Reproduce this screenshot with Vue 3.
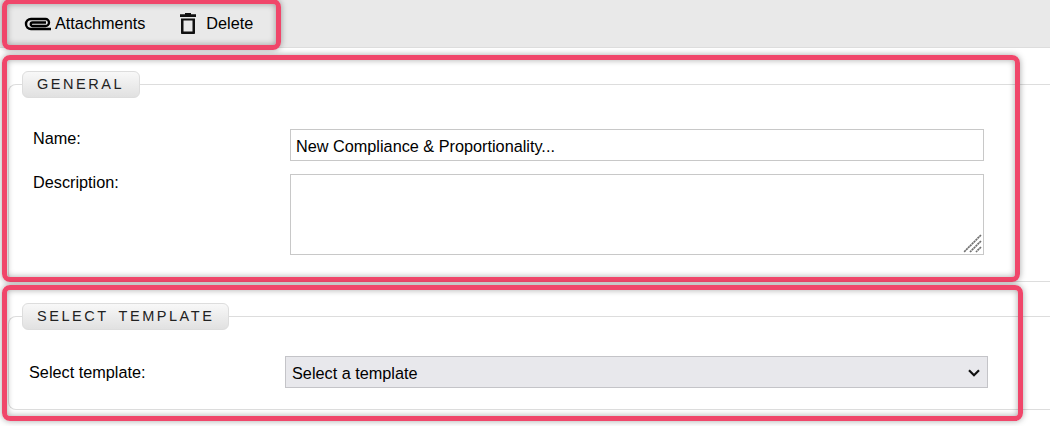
<template>
  <div class="page">
    <!-- toolbar -->
    <div class="toolbar">
      <button class="tool-btn attach">
        <svg width="28" height="14" viewBox="0 0 28 14" fill="none" stroke="#000" stroke-width="2.4">
          <path d="M27 12H7a5 5 0 0 1 0-10H21.500a3.500 3.500 0 0 1 0 7H8.500a1.750 1.750 0 0 1 0-3.500H22" />
        </svg>
        <span>Attachments</span>
      </button>
      <button class="tool-btn delete">
        <svg width="18" height="21" viewBox="0 0 18 21" fill="#111">
          <path d="M6 0h6v1.2h5V4H1V1.2h5z" />
          <path d="M2 5.500h14V20.200a.8.8 0 0 1-.8.8H2.800a.8.8 0 0 1-.8-.8zM4.500 7.500V18.500h9V7.500z" fill-rule="evenodd" />
        </svg>
        <span>Delete</span>
      </button>
    </div>

    <fieldset class="group general">
      <legend>GENERAL</legend>
      <div class="form-grid">
        <label class="lbl">Name:</label>
        <input v-model="name" type="text" class="field" />
        <label class="lbl desc">Description:</label>
        <div class="control">
          <textarea v-model="description" class="field area"></textarea>
          <svg class="grip" width="20" height="20" viewBox="0 0 20 20" stroke="#707070" stroke-width="1.7" stroke-dasharray="2.200 0.500">
            <path d="M18 1L1 18M18 7L7 18M18 13L13 18" />
          </svg>
        </div>
      </div>
    </fieldset>

    <fieldset class="group template">
      <legend>SELECT TEMPLATE</legend>
      <div class="form-grid">
        <label class="lbl">Select template:</label>
        <div class="control">
          <select v-model="template" class="picker">
            <option value="">Select a template</option>
          </select>
          <svg class="chevron" width="12" height="8" viewBox="0 0 12 8" fill="none" stroke="#111" stroke-width="2.2">
            <path d="M1 1.300L6 6.200L11 1.300" />
          </svg>
        </div>
      </div>
    </fieldset>

    <!-- red annotation boxes -->
    <div class="mark mark-toolbar"></div>
    <div class="mark mark-general"></div>
    <div class="mark mark-template"></div>
  </div>
</template>

<script setup>
import { ref } from 'vue'

const name = ref('New Compliance & Proportionality...')
const description = ref('')
const template = ref('')
</script>

<style>
html, body {
  margin: 0;
  background: #fff;
  overflow: hidden;
}
</style>

<style scoped>
.page {
  position: relative;
  width: 1050px;
  height: 426px;
  overflow: hidden;
  font-family: "Liberation Sans", Arial, sans-serif;
  font-size: 16.25px;
  color: #000;
}

.toolbar {
  display: flex;
  align-items: center;
  height: 47px;
  background: #e9e9e9;
  border-bottom: 1px solid #ddd;
}

.tool-btn {
  display: flex;
  align-items: center;
  padding: 0;
  background: none;
  border: none;
  font: inherit;
  color: #000;
}

.attach {
  margin-left: 24px;
  gap: 3px;
}

.delete {
  margin-left: 34px;
  gap: 9px;
}

.group {
  margin: 0 0 0 8px;
  min-width: 0;
  border: 1px solid #ddd;
  border-right: none;
  border-radius: 8px 0 0 8px;
}

.general {
  margin-top: 23px;
  padding: 31px 66px 26px 24px;
}

.general legend {
  margin-left: -11px;
  padding-right: 14.5px;
}

.template {
  margin-top: 21px;
  padding: 26px 62px 21px 20px;
}

.template legend {
  margin-left: -7px;
}

legend {
  padding: 0 13.5px 0 14px;
  height: 27px;
  box-sizing: border-box;
  line-height: 25px;
  font-size: 14.5px;
  letter-spacing: 2.53px;
  word-spacing: 4px;
  color: #222;
  background: linear-gradient(180deg, #f8f8f8, #e1e1e1);
  border: 1px solid #ddd;
  border-radius: 6px;
}

.form-grid {
  display: grid;
  grid-template-columns: 257px 1fr;
  row-gap: 13px;
}

.template .form-grid {
  grid-template-columns: 256px 1fr;
  align-items: center;
}

.lbl {
  line-height: 18px;
}

.desc {
  margin-top: -1px;
}

.control {
  position: relative;
}

.field {
  box-sizing: border-box;
  width: 100%;
  height: 32px;
  margin: 0;
  padding: 2px 5px 0;
  border: 1px solid #c8c8c8;
  border-radius: 0;
  outline: none;
  font: inherit;
  color: #000;
  display: block;
}

.area {
  height: 81px;
  padding: 5px;
  resize: none;
}

.grip {
  position: absolute;
  right: 1px;
  bottom: 1px;
}

.picker {
  display: block;
  box-sizing: border-box;
  width: 100%;
  height: 32px;
  margin: 0;
  padding: 2px 6px 0;
  appearance: none;
  background: #e8e8ec;
  border: 1px solid #c4c4c8;
  border-radius: 0;
  font: inherit;
  color: #000;
}

.chevron {
  position: absolute;
  right: 8px;
  top: 13px;
}

.mark {
  position: absolute;
  box-sizing: border-box;
  border: 5px solid #f0466a;
  border-radius: 8px;
  box-shadow: 0 0 6px rgba(0, 0, 0, 0.35), inset 0 0 6px rgba(0, 0, 0, 0.35);
  pointer-events: none;
}

.mark-toolbar {
  left: 2px;
  top: -1px;
  width: 279px;
  height: 51px;
}

.mark-general {
  left: 2px;
  top: 55px;
  width: 1018px;
  height: 227px;
}

.mark-template {
  left: 2px;
  top: 285px;
  width: 1021px;
  height: 136px;
}
</style>
